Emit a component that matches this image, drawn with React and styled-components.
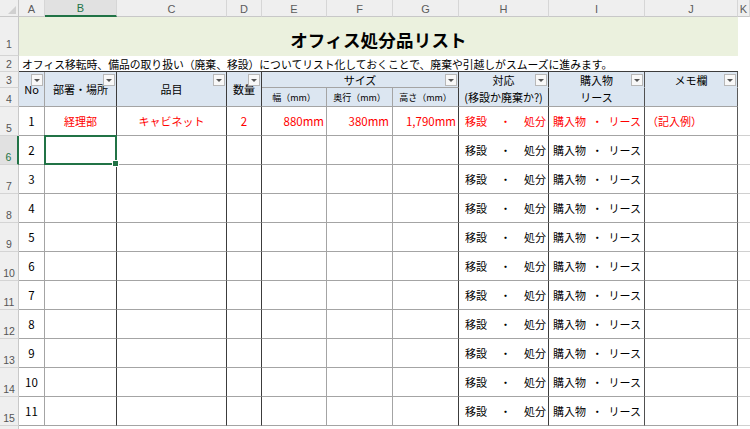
import React from 'react';
import styled, { createGlobalStyle, css } from 'styled-components';

const DARK = '#3c3c3c';
const MID = '#a4a4a4';
const GRID = '#d0d0d0';
const GREEN = '#217346';
const RED = '#ff0000';

const GlobalStyle = createGlobalStyle`
  html, body {
    margin: 0;
    padding: 0;
    background: #ffffff;
    overflow: hidden;
  }
  body {
    font-family: "Noto Sans CJK JP", "Noto Sans", sans-serif;
  }
`;

// grid placement shared by every cell of the sheet
const place = css`
  grid-column: ${({ $col }) => $col} / span ${({ $cs }) => $cs || 1};
  grid-row: ${({ $row }) => $row} / span ${({ $rs }) => $rs || 1};
  box-sizing: border-box;
  min-width: 0;
`;

const Sheet = styled.div`
  display: grid;
  grid-template-columns: 19px 26px 72px 110px 35px 65px 66px 66px 90px 96px 93px 1fr;
  grid-template-rows: 17px 39px 16px 16px 19px repeat(12, 29px);
  width: 750px;
  height: 429px;
  overflow: hidden;
  font-family: "Noto Sans CJK JP", "Noto Sans", sans-serif;
  color: #000;
`;

const Corner = styled.div`
  ${place}
  position: relative;
  background: #efefef;
  border-right: 1px solid #c8c8c8;
  border-bottom: 1px solid #c8c8c8;

  &::after {
    content: '';
    position: absolute;
    right: 2px;
    bottom: 2px;
    border-left: 8px solid transparent;
    border-bottom: 8px solid #d0d0d0;
  }
`;

const ColHead = styled.div`
  ${place}
  display: flex;
  align-items: flex-end;
  justify-content: center;
  padding-bottom: 1px;
  background: ${({ $selected }) => ($selected ? '#e1e1e1' : '#efefef')};
  color: ${({ $selected }) => ($selected ? GREEN : '#5c5c5c')};
  border-right: 1px solid #d6d6d6;
  border-bottom: ${({ $selected }) => ($selected ? `2px solid ${GREEN}` : '1px solid #c8c8c8')};
  font-size: 11px;
  font-family: "Liberation Sans", Arial, sans-serif;
`;

const RowHead = styled.div`
  ${place}
  grid-column: 1;
  display: flex;
  align-items: flex-end;
  justify-content: center;
  padding-bottom: ${({ $tall }) => ($tall ? 5 : 1)}px;
  background: ${({ $selected }) => ($selected ? '#e1e1e1' : '#efefef')};
  color: ${({ $selected }) => ($selected ? GREEN : '#555555')};
  border-bottom: 1px solid #d4d4d4;
  border-right: ${({ $selected }) => ($selected ? `2px solid ${GREEN}` : '1px solid #c8c8c8')};
  font-size: 10.5px;
  font-family: "Liberation Sans", Arial, sans-serif;
`;

const TitleBand = styled.div`
  ${place}
  display: flex;
  align-items: center;
  justify-content: center;
  padding-top: 5px;
  background: #ebf1de;
  font-size: 17.5px;
  font-weight: 700;
  letter-spacing: 0.2px;
`;

const NoteLine = styled.div`
  ${place}
  display: flex;
  align-items: center;
  padding-left: 3px;
  border-bottom: 1px solid ${DARK};
  font-size: 10.8px;
  white-space: nowrap;
`;

const HeadCell = styled.div`
  ${place}
  position: relative;
  display: flex;
  align-items: center;
  justify-content: center;
  background: #dce6f1;
  border-right: 1px solid ${({ $right }) => $right || DARK};
  border-bottom: 1px solid ${({ $bottom }) => $bottom || 'transparent'};
  font-size: ${({ $small }) => ($small ? '9px' : '11px')};
  white-space: nowrap;
  overflow: hidden;
`;

const FilterButton = styled.span`
  position: absolute;
  top: 2px;
  right: 1px;
  z-index: 1;
  width: 12px;
  height: 12px;
  box-sizing: border-box;
  display: flex;
  align-items: center;
  justify-content: center;
  background: #f8f8f8;
  border: 1px solid #b8b8b8;

  &::before {
    content: '';
    border-left: 3px solid transparent;
    border-right: 3px solid transparent;
    border-top: 3px solid #555555;
  }
`;

const DataCell = styled.div`
  ${place}
  position: relative;
  display: flex;
  align-items: center;
  justify-content: ${({ $justify }) => $justify || 'center'};
  padding: 0 ${({ $padR }) => $padR ?? 2}px 0 ${({ $padL }) => $padL ?? 2}px;
  border-right: 1px solid ${({ $right }) => $right || DARK};
  border-bottom: 1px solid ${MID};
  color: ${({ $red }) => ($red ? RED : '#000')};
  font-size: ${({ $num }) => ($num ? '11.5px' : '11px')};
  white-space: nowrap;
`;

const GridCell = styled.div`
  ${place}
  border-bottom: 1px solid ${GRID};
`;

const Selection = styled.span`
  position: absolute;
  left: -1px;
  top: -1px;
  right: -1px;
  bottom: -1px;
  z-index: 2;
  border: 2px solid ${GREEN};
  pointer-events: none;

  &::after {
    content: '';
    position: absolute;
    right: -4px;
    bottom: -4px;
    width: 5px;
    height: 5px;
    background: ${GREEN};
    border: 1px solid #fff;
  }
`;

const LETTERS = ['A', 'B', 'C', 'D', 'E', 'F', 'G', 'H', 'I', 'J', 'K'];
const SELECTED_ROW = 6;

function ChoiceText({ parts }) {
  return parts.map((p) => <span key={p}>{p}</span>);
}

function DataRow({ no, sheetRow }) {
  const row = sheetRow + 1;
  const sample = no === 1;
  return (
    <>
      <RowHead $row={row} $selected={sheetRow === SELECTED_ROW}>{sheetRow}</RowHead>
      <DataCell $col={2} $row={row} $right={MID} $num>{no}</DataCell>
      <DataCell $col={3} $row={row} $red>
        {sample && '経理部'}
        {sheetRow === SELECTED_ROW && <Selection />}
      </DataCell>
      <DataCell $col={4} $row={row} $red>{sample && 'キャビネット'}</DataCell>
      <DataCell $col={5} $row={row} $red $num>{sample && '2'}</DataCell>
      <DataCell $col={6} $row={row} $right={MID} $justify="flex-end" $red $num>{sample && '880mm'}</DataCell>
      <DataCell $col={7} $row={row} $right={MID} $justify="flex-end" $padR={3} $red $num>{sample && '380mm'}</DataCell>
      <DataCell $col={8} $row={row} $justify="flex-end" $red $num>{sample && '1,790mm'}</DataCell>
      <DataCell $col={9} $row={row} $justify="space-between" $padL={6} $padR={2} $red={sample}>
        <ChoiceText parts={['移設', '・', '処分']} />
      </DataCell>
      <DataCell $col={10} $row={row} $right="#505050" $justify="space-between" $padL={4} $padR={3} $red={sample}>
        <ChoiceText parts={['購入物', '・', 'リース']} />
      </DataCell>
      <DataCell $col={11} $row={row} $right="#5a5a5a" $justify="flex-start" $padL={2} $red>
        {sample && '（記入例）'}
      </DataCell>
      <GridCell $col={12} $row={row} />
    </>
  );
}

export default function App() {
  return (
    <>
      <GlobalStyle />
      <Sheet>
        <Corner $col={1} $row={1} />
        {LETTERS.map((l, i) => (
          <ColHead key={l} $col={i + 2} $row={1} $selected={l === 'B'}>{l}</ColHead>
        ))}

        {[1, 2, 3, 4].map((n) => (
          <RowHead key={n} $row={n + 1} $tall={n === 1}>{n}</RowHead>
        ))}

        <TitleBand $col={2} $cs={10} $row={2}>オフィス処分品リスト</TitleBand>
        <NoteLine $col={2} $cs={10} $row={3}>
          オフィス移転時、備品の取り扱い（廃棄、移設）についてリスト化しておくことで、廃棄や引越しがスムーズに進みます。
        </NoteLine>

        <HeadCell $col={2} $row={4} $rs={2} $right={MID} $bottom={MID}>
          No<FilterButton />
        </HeadCell>
        <HeadCell $col={3} $row={4} $rs={2} $bottom={MID}>
          部署・場所<FilterButton />
        </HeadCell>
        <HeadCell $col={4} $row={4} $rs={2} $bottom={MID}>
          品目<FilterButton />
        </HeadCell>
        <HeadCell $col={5} $row={4} $rs={2} $bottom={MID}>
          数量<FilterButton />
        </HeadCell>
        <HeadCell $col={6} $cs={3} $row={4} $bottom={MID}>
          サイズ<FilterButton />
        </HeadCell>
        <HeadCell $col={6} $row={5} $right={MID} $bottom={MID} $small>幅（mm）</HeadCell>
        <HeadCell $col={7} $row={5} $right={MID} $bottom={MID} $small>奥行（mm）</HeadCell>
        <HeadCell $col={8} $row={5} $bottom={MID} $small>高さ（mm）</HeadCell>
        <HeadCell $col={9} $row={4}>
          対応<FilterButton />
        </HeadCell>
        <HeadCell $col={9} $row={5} $bottom={MID}>(移設か廃棄か?)</HeadCell>
        <HeadCell $col={10} $row={4} $right="#505050">
          購入物<FilterButton />
        </HeadCell>
        <HeadCell $col={10} $row={5} $right="#505050" $bottom={MID}>リース</HeadCell>
        <HeadCell $col={11} $row={4} $right="#5a5a5a">
          メモ欄<FilterButton />
        </HeadCell>
        <HeadCell $col={11} $row={5} $right="#5a5a5a" $bottom={MID} />

        {Array.from({ length: 11 }, (_, i) => (
          <DataRow key={i} no={i + 1} sheetRow={i + 5} />
        ))}
        <RowHead $row={17} />
      </Sheet>
    </>
  );
}
